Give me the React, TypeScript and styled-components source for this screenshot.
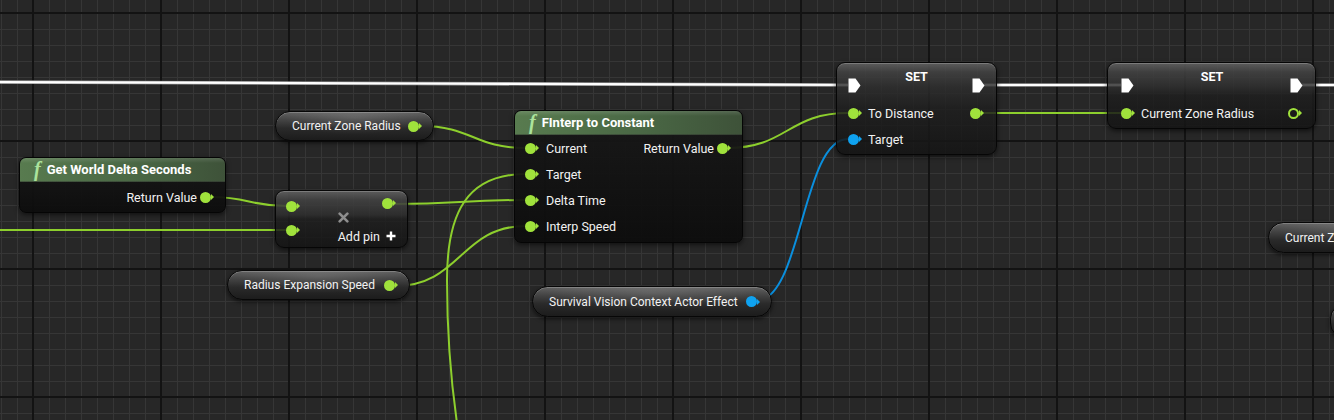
import styled, { createGlobalStyle } from "styled-components";

const GREEN = "#a0e23c";
const WIRE_GREEN = "#8dcf2d";
const BLUE = "#0fa2f0";
const WIRE_BLUE = "#0a8fde";

const GlobalStyle = createGlobalStyle`
  html, body {
    margin: 0;
    padding: 0;
    background: #272727;
  }
  body {
    font-family: Roboto, "Noto Sans", "Liberation Sans", sans-serif;
  }
`;

const Canvas = styled.div`
  position: relative;
  width: 1334px;
  height: 420px;
  overflow: hidden;
  background-color: #272727;
  background-image: linear-gradient(to right, #131313 2px, transparent 2px),
    linear-gradient(to bottom, #131313 2px, transparent 2px),
    linear-gradient(to right, #363636 1px, transparent 1px),
    linear-gradient(to bottom, #363636 1px, transparent 1px);
  background-size: 128px 128px, 128px 128px, 16px 16px, 16px 16px;
  background-position: 32px 0, 0 12px, 1px 0, 0 13px;
`;

const WireLayer = styled.svg`
  position: absolute;
  left: 0;
  top: 0;
  z-index: 0;
`;

const Placed = styled.div<{ $x: number; $y: number; $w: number; $h?: number }>`
  position: absolute;
  left: ${(p) => p.$x}px;
  top: ${(p) => p.$y}px;
  width: ${(p) => p.$w}px;
  ${(p) => (p.$h ? `height: ${p.$h}px;` : "")}
  box-sizing: border-box;
  z-index: 1;
  color: #f2f2f2;
  font-size: 12.5px;
`;

/* function call node */
const FuncNode = styled(Placed)`
  display: flex;
  flex-direction: column;
  border: 1px solid #050505;
  border-radius: 7px;
  background: linear-gradient(180deg, rgba(24, 24, 24, 0.94), rgba(12, 12, 12, 0.94));
  box-shadow: 0 2px 5px rgba(0, 0, 0, 0.55);
`;

const FuncHeader = styled.div`
  height: 23px;
  display: flex;
  align-items: center;
  gap: 6px;
  padding: 0 12px 0 14px;
  border-radius: 6px 6px 0 0;
  background: linear-gradient(180deg, rgba(255, 255, 255, 0.12) 0, rgba(255, 255, 255, 0) 5px),
    linear-gradient(90deg, #587b4f 0%, #4a6845 55%, #3e5239 100%);
  border-bottom: 1px solid rgba(0, 0, 0, 0.35);
  font-weight: 700;
  font-size: 13px;
  color: #fff;
`;

const FuncIcon = styled.span`
  font-family: "Liberation Serif", "DejaVu Serif", serif;
  font-style: italic;
  font-size: 20px;
  line-height: 1;
  color: #abe39c;
  margin-top: -2px;
`;

const FuncBody = styled.div<{ $pt?: number; $pb?: number }>`
  display: grid;
  grid-template-columns: 1fr auto;
  padding: ${(p) => p.$pt ?? 1}px 10px ${(p) => p.$pb ?? 2}px 10px;
`;

const PinColumn = styled.div`
  display: flex;
  flex-direction: column;
`;

const PinRow = styled.div<{ $right?: boolean; $h?: number }>`
  display: flex;
  align-items: center;
  justify-content: ${(p) => (p.$right ? "flex-end" : "flex-start")};
  gap: ${(p) => (p.$right ? 3 : 6)}px;
  height: ${(p) => p.$h ?? 26}px;
  white-space: nowrap;
`;

const SplitRow = styled.div`
  display: flex;
  align-items: center;
  justify-content: space-between;
  height: 26px;
  white-space: nowrap;
`;

const Inline = styled.span`
  display: flex;
  align-items: center;
  gap: 5px;
`;

const Dot = styled.span<{ $c: string; $hollow?: boolean }>`
  position: relative;
  flex: none;
  width: 11px;
  height: 11px;
  margin-right: 4px;
  box-sizing: border-box;
  border-radius: 50%;
  border: 2px solid ${(p) => p.$c};
  background: ${(p) => (p.$hollow ? "transparent" : p.$c)};
  &::after {
    content: "";
    position: absolute;
    left: 9px;
    top: 3.5px;
    margin-top: -3px;
    border-left: 3px solid ${(p) => p.$c};
    border-top: 3px solid transparent;
    border-bottom: 3px solid transparent;
  }
`;

const ExecShape = styled.svg`
  flex: none;
  display: block;
`;

function ExecPin() {
  return (
    <ExecShape width="13" height="15" viewBox="0 0 13 15">
      <path d="M0.5 0.5 H7.5 L12.5 7.5 L7.5 14.5 H0.5 Z" fill="#fff" />
    </ExecShape>
  );
}

/* variable getter pill */
const Pill = styled(Placed)`
  height: ${(p) => p.$h ?? 30}px;
  display: flex;
  align-items: center;
  justify-content: space-between;
  gap: 6px;
  padding: 0 10px 0 16px;
  border: 1px solid #070707;
  border-radius: 16px;
  font-size: 12px;
  background: radial-gradient(ellipse 45% 60% at 50% 20%, rgba(255, 255, 255, 0.12), transparent),
    linear-gradient(180deg, #626262 0%, #444 28%, #2a2a2a 58%, #1c1c1c 100%);
  box-shadow: 0 2px 4px rgba(0, 0, 0, 0.6), inset 0 1px 0 rgba(255, 255, 255, 0.2);
  white-space: nowrap;
`;

/* compact / SET nodes */
const GlossNode = styled(Placed)`
  border: 1px solid #060606;
  border-radius: 9px;
  background: linear-gradient(
    180deg,
    rgba(96, 96, 96, 0.92) 0,
    rgba(66, 66, 66, 0.88) 9px,
    rgba(46, 46, 46, 0.84) 24px,
    rgba(30, 30, 30, 0.82) 50%,
    rgba(20, 20, 20, 0.86) 100%
  );
  box-shadow: 0 2px 5px rgba(0, 0, 0, 0.6), inset 0 1px 0 rgba(255, 255, 255, 0.2);
`;

const SetNode = styled(GlossNode)<{ $pl: number; $pr: number }>`
  padding: 0 ${(p) => p.$pr}px 2px ${(p) => p.$pl}px;
`;

const SetTop = styled.div`
  display: grid;
  grid-template-columns: auto 1fr auto;
  height: 37px;
`;

const SetTitle = styled.div`
  align-self: start;
  padding-top: 7px;
  text-align: center;
  font-weight: 700;
  line-height: 14px;
  color: #fff;
`;

const ExecSlot = styled.div`
  align-self: end;
  margin-bottom: 7px;
`;

const AddNode = styled(GlossNode)`
  display: grid;
  grid-template-columns: auto 1fr;
  padding: 3px 10px 0 10px;
`;

const AddRight = styled.div`
  display: flex;
  flex-direction: column;
  align-items: flex-end;
`;

const MulSign = styled.svg`
  align-self: center;
  margin-right: 11px;
  display: block;
`;

const AddPinRow = styled.div`
  display: flex;
  align-items: center;
  gap: 6px;
  height: 18px;
  margin-top: 4px;
  margin-right: 1px;
`;

function curve(x1: number, y1: number, x2: number, y2: number) {
  const d = Math.max(Math.abs(x2 - x1) * 0.5, 20);
  return `M${x1} ${y1} C${x1 + d} ${y1}, ${x2 - d} ${y2}, ${x2} ${y2}`;
}

const dataWires = [
  curve(420, 126, 526, 148),
  curve(211, 197, 287, 206),
  curve(-10, 230, 287, 230),
  curve(394, 204, 526, 200),
  curve(395, 286, 526, 226),
  "M526 174 C466 174, 447 214, 447 280 C447 340, 452 390, 458 430",
  curve(727, 148, 848, 113),
  curve(982, 113, 1121, 113),
];

const execWires = [curve(-20, 82, 848, 85), curve(984, 85, 1121, 85), curve(1302, 85, 1345, 85)];

function Wires() {
  return (
    <WireLayer width="1334" height="420" viewBox="0 0 1334 420">
      {execWires.map((d, i) => (
        <g key={"e" + i} fill="none">
          <path d={d} stroke="#9a9a9a" strokeWidth="3.6" />
          <path d={d} stroke="#ffffff" strokeWidth="2.2" />
        </g>
      ))}
      {dataWires.map((d, i) => (
        <path key={"d" + i} d={d} fill="none" stroke={WIRE_GREEN} strokeWidth="2" />
      ))}
      <path d={curve(756, 301, 848, 139)} fill="none" stroke={WIRE_BLUE} strokeWidth="2" />
    </WireLayer>
  );
}

export default function App() {
  return (
    <>
      <GlobalStyle />
      <Canvas>
        <Wires />

        <FuncNode $x={19} $y={157} $w={207}>
          <FuncHeader>
            <FuncIcon>f</FuncIcon>
            Get World Delta Seconds
          </FuncHeader>
          <FuncBody $pt={2} $pb={2}>
            <span />
            <PinRow $right>
              Return Value
              <Dot $c={GREEN} />
            </PinRow>
          </FuncBody>
        </FuncNode>

        <Pill $x={275} $y={111} $w={159}>
          Current Zone Radius
          <Dot $c={GREEN} />
        </Pill>

        <AddNode $x={275} $y={190} $w={133} $h={58}>
          <PinColumn>
            <PinRow $h={24}>
              <Dot $c={GREEN} />
            </PinRow>
            <PinRow $h={24}>
              <Dot $c={GREEN} />
            </PinRow>
          </PinColumn>
          <AddRight>
            <PinRow $right $h={18}>
              <Dot $c={GREEN} />
            </PinRow>
            <MulSign width="11" height="11" viewBox="0 0 10 10">
              <path d="M1.5 1.5 L8.5 8.5 M8.5 1.5 L1.5 8.5" stroke="#8e8e8e" strokeWidth="2.4" strokeLinecap="round" />
            </MulSign>
            <AddPinRow>
              Add pin
              <svg width="10" height="10" viewBox="0 0 10 10">
                <path d="M5 0.5 V9.5 M0.5 5 H9.5" stroke="#fff" strokeWidth="2.4" />
              </svg>
            </AddPinRow>
          </AddRight>
        </AddNode>

        <Pill $x={227} $y={270} $w={183}>
          Radius Expansion Speed
          <Dot $c={GREEN} />
        </Pill>

        <FuncNode $x={514} $y={110} $w={229}>
          <FuncHeader>
            <FuncIcon>f</FuncIcon>
            FInterp to Constant
          </FuncHeader>
          <FuncBody $pt={0} $pb={3}>
            <PinColumn>
              <PinRow>
                <Dot $c={GREEN} />
                Current
              </PinRow>
              <PinRow>
                <Dot $c={GREEN} />
                Target
              </PinRow>
              <PinRow>
                <Dot $c={GREEN} />
                Delta Time
              </PinRow>
              <PinRow>
                <Dot $c={GREEN} />
                Interp Speed
              </PinRow>
            </PinColumn>
            <PinColumn>
              <PinRow $right>
                Return Value
                <Dot $c={GREEN} />
              </PinRow>
            </PinColumn>
          </FuncBody>
        </FuncNode>

        <Pill $x={532} $y={286} $w={240} $h={31}>
          Survival Vision Context Actor Effect
          <Dot $c={BLUE} />
        </Pill>

        <SetNode $x={836} $y={62} $w={161} $pl={11} $pr={11}>
          <SetTop>
            <ExecSlot>
              <ExecPin />
            </ExecSlot>
            <SetTitle>SET</SetTitle>
            <ExecSlot>
              <ExecPin />
            </ExecSlot>
          </SetTop>
          <SplitRow>
            <Inline>
              <Dot $c={GREEN} />
              To Distance
            </Inline>
            <Dot $c={GREEN} />
          </SplitRow>
          <SplitRow>
            <Inline>
              <Dot $c={BLUE} />
              Target
            </Inline>
          </SplitRow>
        </SetNode>

        <SetNode $x={1107} $y={62} $w={209} $pl={13} $pr={12}>
          <SetTop>
            <ExecSlot>
              <ExecPin />
            </ExecSlot>
            <SetTitle>SET</SetTitle>
            <ExecSlot>
              <ExecPin />
            </ExecSlot>
          </SetTop>
          <SplitRow>
            <Inline>
              <Dot $c={GREEN} />
              Current Zone Radius
            </Inline>
            <Dot $c={GREEN} $hollow />
          </SplitRow>
        </SetNode>

        <Pill $x={1268} $y={222} $w={180} $h={31}>
          Current Zone Radius
          <Dot $c={GREEN} />
        </Pill>

        <Pill $x={1330} $y={303} $w={120} $h={36} />
      </Canvas>
    </>
  );
}
